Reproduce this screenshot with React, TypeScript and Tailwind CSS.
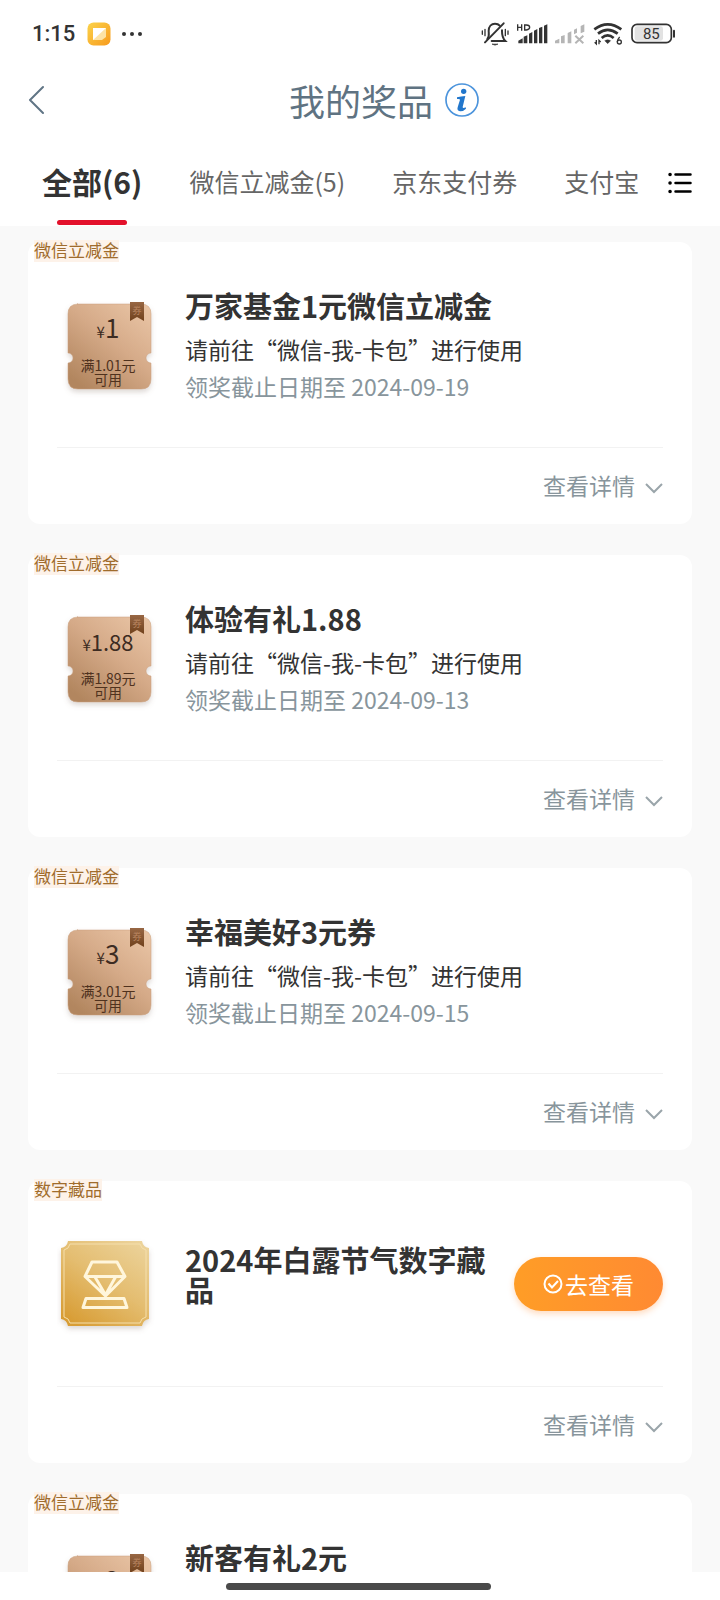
import { useState } from "react";

interface Prize {
  id: number;
  tag: string;
  title: string;
  kind: "coupon" | "collectible";
  amount?: string;
  condition?: string;
  usage?: string;
  deadline?: string;
}

const prizes: Prize[] = [
  {
    id: 1,
    tag: "微信立减金",
    title: "万家基金1元微信立减金",
    kind: "coupon",
    amount: "1",
    condition: "满1.01元",
    usage: "请前往“微信-我-卡包”进行使用",
    deadline: "2024-09-19",
  },
  {
    id: 2,
    tag: "微信立减金",
    title: "体验有礼1.88",
    kind: "coupon",
    amount: "1.88",
    condition: "满1.89元",
    usage: "请前往“微信-我-卡包”进行使用",
    deadline: "2024-09-13",
  },
  {
    id: 3,
    tag: "微信立减金",
    title: "幸福美好3元券",
    kind: "coupon",
    amount: "3",
    condition: "满3.01元",
    usage: "请前往“微信-我-卡包”进行使用",
    deadline: "2024-09-15",
  },
  {
    id: 4,
    tag: "数字藏品",
    title: "2024年白露节气数字藏品",
    kind: "collectible",
  },
  {
    id: 5,
    tag: "微信立减金",
    title: "新客有礼2元",
    kind: "coupon",
    amount: "2",
  },
];

const tabs = ["全部(6)", "微信立减金(5)", "京东支付券", "支付宝"];

function StatusBar() {
  return (
    <div className="flex h-[66px] shrink-0 items-center pt-0.5 pl-8 pr-11 text-[#333]">
      <span className="font-[Roboto,sans-serif] text-[22px] leading-6 font-medium">
        1:15
      </span>
      <svg className="ml-3 h-6 w-6" viewBox="0 0 24 24">
        <defs>
          <linearGradient id="app" x1="0" y1="0" x2="1" y2="1">
            <stop offset="0" stopColor="#fbd34a" />
            <stop offset="1" stopColor="#f79a1d" />
          </linearGradient>
        </defs>
        <rect x="0.5" y="0.5" width="23" height="23" rx="6" fill="url(#app)" />
        <path d="M6 6h13v9l-4 3H6z" fill="#fde3a5" />
        <path d="M6 6h13L6 18z" fill="#fff" />
      </svg>
      <svg className="ml-2.5 h-6 w-6" viewBox="0 0 24 24" fill="currentColor">
        <circle cx="3" cy="12" r="2" />
        <circle cx="11" cy="12" r="2" />
        <circle cx="19" cy="12" r="2" />
      </svg>
      <div className="ml-auto flex items-center">
        {/* muted bell */}
        <svg
          className="h-[26px] w-7"
          viewBox="365 61 84 78"
          fill="none"
          stroke="currentColor"
          strokeWidth="6"
          strokeLinecap="round"
        >
          <path d="M384 115C391 108 388 98 388 91C388 77 396 69 407 69C413 69 418 71 421 75M428 89C428 101 427 110 438 121H397" />
          <path d="M433 68L377 125" />
          <path d="M369 91v10M377 86v19M438 86v19M446 91v10" strokeWidth="4" />
          <path d="M399 131q8 5 16 0z" fill="currentColor" strokeWidth="2" />
        </svg>
        {/* primary sim */}
        <svg
          className="ml-[7px] h-[26px] w-8"
          viewBox="470 61 96 78"
          fill="currentColor"
        >
          <path
            d="M475 71v19M487 71v19M475 80h12M496 73v15h5q10-1 10-8t-10-7z"
            fill="none"
            stroke="currentColor"
            strokeWidth="4"
          />
          <path d="M477 120l13-7v15h-13zM493 108l11-4v24h-11zM509 99l10-5v34h-10zM524 90l10-5v43h-10zM539 82l10-4v50h-10zM554 75l10-4v57h-10z" />
        </svg>
        {/* secondary sim without service */}
        <svg
          className="ml-[7px] h-[26px] w-[30px]"
          viewBox="588 61 90 78"
          fill="#b5b5b5"
        >
          <path d="M588 120l13-6v14h-13zM606 107l11-4v25h-11zM626 97l11-5v36h-11zM645 87l9-4v13l-9 5zM665 76l11-5v22l-11 5z" />
          <path
            d="M649 105l24 23M673 105l-24 23"
            stroke="#b5b5b5"
            strokeWidth="6"
          />
        </svg>
        {/* wifi */}
        <svg
          className="ml-2 h-[26px] w-[30px]"
          viewBox="699 61 90 78"
          fill="none"
          stroke="currentColor"
        >
          <path
            d="M703 86Q743 56 784 86M714 99Q743 76 773 99M725 112Q743 96 761 112"
            strokeWidth="8"
          />
          <path
            d="M734 120q9-6 18 0l-9 9z"
            fill="currentColor"
            strokeWidth="1"
          />
          <path d="M709 118v12l-5-5M717 131v-12l5 5" strokeWidth="4" />
          <path d="M779 109q-7 7-7 15" strokeWidth="4" />
          <circle cx="778" cy="124" r="6" strokeWidth="4" />
        </svg>
        {/* battery */}
        <svg
          className="ml-2 h-[26px] w-[45px]"
          viewBox="813 61 135 78"
          fill="none"
        >
          <rect x="824" y="77" width="85" height="43" rx="7" fill="#e2e2e2" />
          <rect
            x="816"
            y="71"
            width="118"
            height="55"
            rx="15"
            stroke="currentColor"
            strokeWidth="5"
          />
          <path
            d="M942 90v18"
            stroke="currentColor"
            strokeWidth="6"
            strokeLinecap="round"
          />
          <text
            x="874"
            y="115"
            textAnchor="middle"
            fontFamily="Roboto, sans-serif"
            fontSize="45"
            fill="#333"
          >
            85
          </text>
        </svg>
      </div>
    </div>
  );
}

function Header() {
  return (
    <header className="flex h-[68px] shrink-0 items-center px-7">
      <button type="button" aria-label="返回" className="w-12">
        <svg
          className="h-8 w-4"
          viewBox="0 0 16 32"
          fill="none"
          stroke="#607585"
          strokeWidth="2"
          strokeLinecap="round"
          strokeLinejoin="round"
        >
          <path d="M15 3L2 16l13 13" />
        </svg>
      </button>
      <div className="flex flex-1 items-center justify-center gap-3">
        <h1 className="text-4xl leading-[48px] text-[#5f7382]">我的奖品</h1>
        <button type="button" aria-label="说明">
          <svg className="h-[34px] w-[34px]" viewBox="0 0 102 102">
            <circle
              cx="51"
              cy="51"
              r="48"
              fill="#fff"
              stroke="#4c94dc"
              strokeWidth="5"
            />
            <circle cx="56" cy="25" r="8" fill="#2277cc" />
            <path
              d="M36 43Q48 40 61 39L53 72Q53 78 62 73L63 77Q54 86 45 85Q35 83 38 73L45 50Q45 47 36 48Z"
              fill="#2277cc"
            />
          </svg>
        </button>
      </div>
    </header>
  );
}

function TabBar() {
  const [active, setActive] = useState(0);

  return (
    <nav className="flex h-[92px] shrink-0 items-stretch pl-[42px] pr-7">
      <div className="flex flex-1 gap-[47px] overflow-hidden">
        {tabs.map((tab, index) => (
          <button
            key={tab}
            type="button"
            onClick={() => setActive(index)}
            className={
              index === active
                ? "flex shrink-0 flex-col items-center text-[30px] font-bold whitespace-nowrap text-[#333]"
                : "flex shrink-0 flex-col items-center text-[25px] whitespace-nowrap text-[#666]"
            }
          >
            <span className="pt-[27px] leading-10">{tab}</span>
            {index === active && (
              <span className="mt-[19px] h-[5px] w-[70px] rounded-full bg-[#e3112b]" />
            )}
          </button>
        ))}
      </div>
      <button type="button" aria-label="全部分类" className="ml-[29px] pt-1.5">
        <svg
          className="h-6 w-6"
          viewBox="0 0 24 24"
          fill="none"
          stroke="#000"
          strokeLinecap="round"
        >
          <path d="M7.500 3.500h15M7.500 12h15M7.500 20.500h15" strokeWidth="2.500" />
          <path d="M2 3.500h.1M2 12h.1M2 20.500h.1" strokeWidth="3.500" />
        </svg>
      </button>
    </nav>
  );
}

function CouponThumb({ prize }: { prize: Prize }) {
  const long = (prize.amount || "").length > 1;

  return (
    <svg
      className="mt-0.5 h-[108px] w-[100px] shrink-0"
      viewBox="-1 0 100 108"
    >
      <defs>
        <linearGradient id="coupon" x1="1" y1="0" x2="0.200" y2="1">
          <stop offset="0" stopColor="#ebc7a8" />
          <stop offset="0.500" stopColor="#d5aa88" />
          <stop offset="1" stopColor="#b2865f" />
        </linearGradient>
        <linearGradient id="ribbon" x1="0" y1="0" x2="0" y2="1">
          <stop offset="0" stopColor="#986744" />
          <stop offset="1" stopColor="#70411c" />
        </linearGradient>
        <filter id="shade" x="-20%" y="-20%" width="140%" height="150%">
          <feDropShadow
            dx="0"
            dy="3"
            stdDeviation="2.500"
            floodColor="#7a6a5a"
            floodOpacity="0.250"
          />
        </filter>
      </defs>
      <path
        d="M19 12H83Q93 12 93 22V61A5 5 0 0 0 93 71V87Q93 97 83 97H20Q10 97 10 87V71A5 5 0 0 0 10 61V22Q10 12 20 12Z"
        fill="url(#coupon)"
        stroke="#c99f7c"
        strokeWidth="0.500"
        filter="url(#shade)"
      />
      <path d="M72 10H86V29L79 25L72 29Z" fill="url(#ribbon)" />
      <text x="79" y="22" textAnchor="middle" fontSize="9" fill="#b98661">
        券
      </text>
      <text x="50" y="46" textAnchor="middle" fill="#3d2c22">
        <tspan fontSize="15">¥</tspan>
        <tspan fontSize={long ? 22 : 26}>{prize.amount}</tspan>
      </text>
      {prize.condition && (
        <g fontSize="14" fill="#4f321e" textAnchor="middle">
          <text x="50" y="79">
            {prize.condition}
          </text>
          <text x="50" y="93">
            可用
          </text>
        </g>
      )}
    </svg>
  );
}

function CollectibleThumb() {
  return (
    <svg
      className="mt-0.5 h-[108px] w-[100px] shrink-0"
      viewBox="-1 0 100 108"
    >
      <defs>
        <linearGradient id="gold" x1="0.900" y1="0" x2="0.200" y2="1">
          <stop offset="0" stopColor="#ecd39b" />
          <stop offset="0.500" stopColor="#e4bd70" />
          <stop offset="1" stopColor="#d89d35" />
        </linearGradient>
      </defs>
      <path
        d="M10 10H84Q85 16 91 17V88Q85 89 84 95H10Q9 89 3 88V17Q9 16 10 10Z"
        fill="url(#gold)"
        filter="url(#shade)"
      />
      <path
        d="M12 13H82Q83 18 88 19V86Q83 87 82 92H12Q11 87 6 86V19Q11 18 12 13Z"
        fill="none"
        stroke="#f5dfac"
        strokeWidth="1"
      />
      <g
        fill="none"
        stroke="#fff6dc"
        strokeWidth="3"
        strokeLinejoin="round"
      >
        <path d="M34 31H59L67 45.500L47.500 65L27 45.500ZM27 45.500H67M37 46L47.500 64L57.500 46" />
        <path d="M28 67.500H66L69 76.500H25Z" />
      </g>
    </svg>
  );
}

function PrizeCard({ prize }: { prize: Prize }) {
  const collectible = prize.kind === "collectible";

  return (
    <article className="relative shrink-0 rounded-xl bg-white px-[29px]">
      <span className="absolute -top-0.5 left-1.5 bg-[#fdf2e9] pb-0.5 text-[17px] leading-5 text-[#a06c2c]">
        {prize.tag}
      </span>
      <div className="flex min-h-[205px] items-start pt-12">
        {collectible ? <CollectibleThumb /> : <CouponThumb prize={prize} />}
        <div
          className={collectible ? "ml-7 flex-1 pt-[15px]" : "ml-7 flex-1"}
        >
          <h2 className="text-[29px] leading-[30px] font-bold text-[#333]">
            {prize.title}
          </h2>
          {prize.usage && (
            <p className="mt-[11px] text-[23px] leading-[37px] text-[#333]">
              {prize.usage}
            </p>
          )}
          {prize.deadline && (
            <p className="text-[23px] leading-[37px] text-[#88959c]">
              领奖截止日期至 {prize.deadline}
            </p>
          )}
        </div>
        {collectible && (
          <button
            type="button"
            className="mt-7 ml-5 flex h-[54px] w-[149px] items-center justify-center gap-0.5 rounded-full bg-linear-to-r from-[#ff9d26] to-[#ff8a32] text-[23px] text-white shadow-[0_3px_6px_rgba(255,140,50,0.3)]"
          >
            <svg
              className="h-5 w-5"
              viewBox="0 0 20 20"
              fill="none"
              stroke="currentColor"
              strokeWidth="2"
            >
              <circle cx="10" cy="10" r="8.500" />
              <path d="M5.500 9.500l3.500 4 6-6.500" />
            </svg>
            去查看
          </button>
        )}
      </div>
      <div className="flex h-[77px] items-center justify-end border-t border-[#f2f2f2] pb-0.5">
        <button
          type="button"
          className="flex items-center gap-2.5 text-[23px] text-[#88959c]"
        >
          查看详情
          <svg
            className="mt-1.5 h-[18px] w-[18px]"
            viewBox="0 0 18 18"
            fill="none"
            stroke="#9aa5aa"
            strokeWidth="2"
          >
            <path d="M1 5l8 8 8-8" />
          </svg>
        </button>
      </div>
    </article>
  );
}

export default function App() {
  return (
    <div className="flex h-screen flex-col bg-white font-['Noto_Sans_CJK_SC',sans-serif]">
      <StatusBar />
      <Header />
      <TabBar />
      <main className="flex flex-1 flex-col gap-[31px] overflow-y-auto bg-[#f9f9f9] px-7 pt-4 [scrollbar-width:none]">
        {prizes.map((prize) => (
          <PrizeCard key={prize.id} prize={prize} />
        ))}
      </main>
      <div className="flex h-7 shrink-0 items-center justify-center pr-1">
        <div className="h-[7px] w-[265px] rounded-full bg-[#4a4a4a]" />
      </div>
    </div>
  );
}
